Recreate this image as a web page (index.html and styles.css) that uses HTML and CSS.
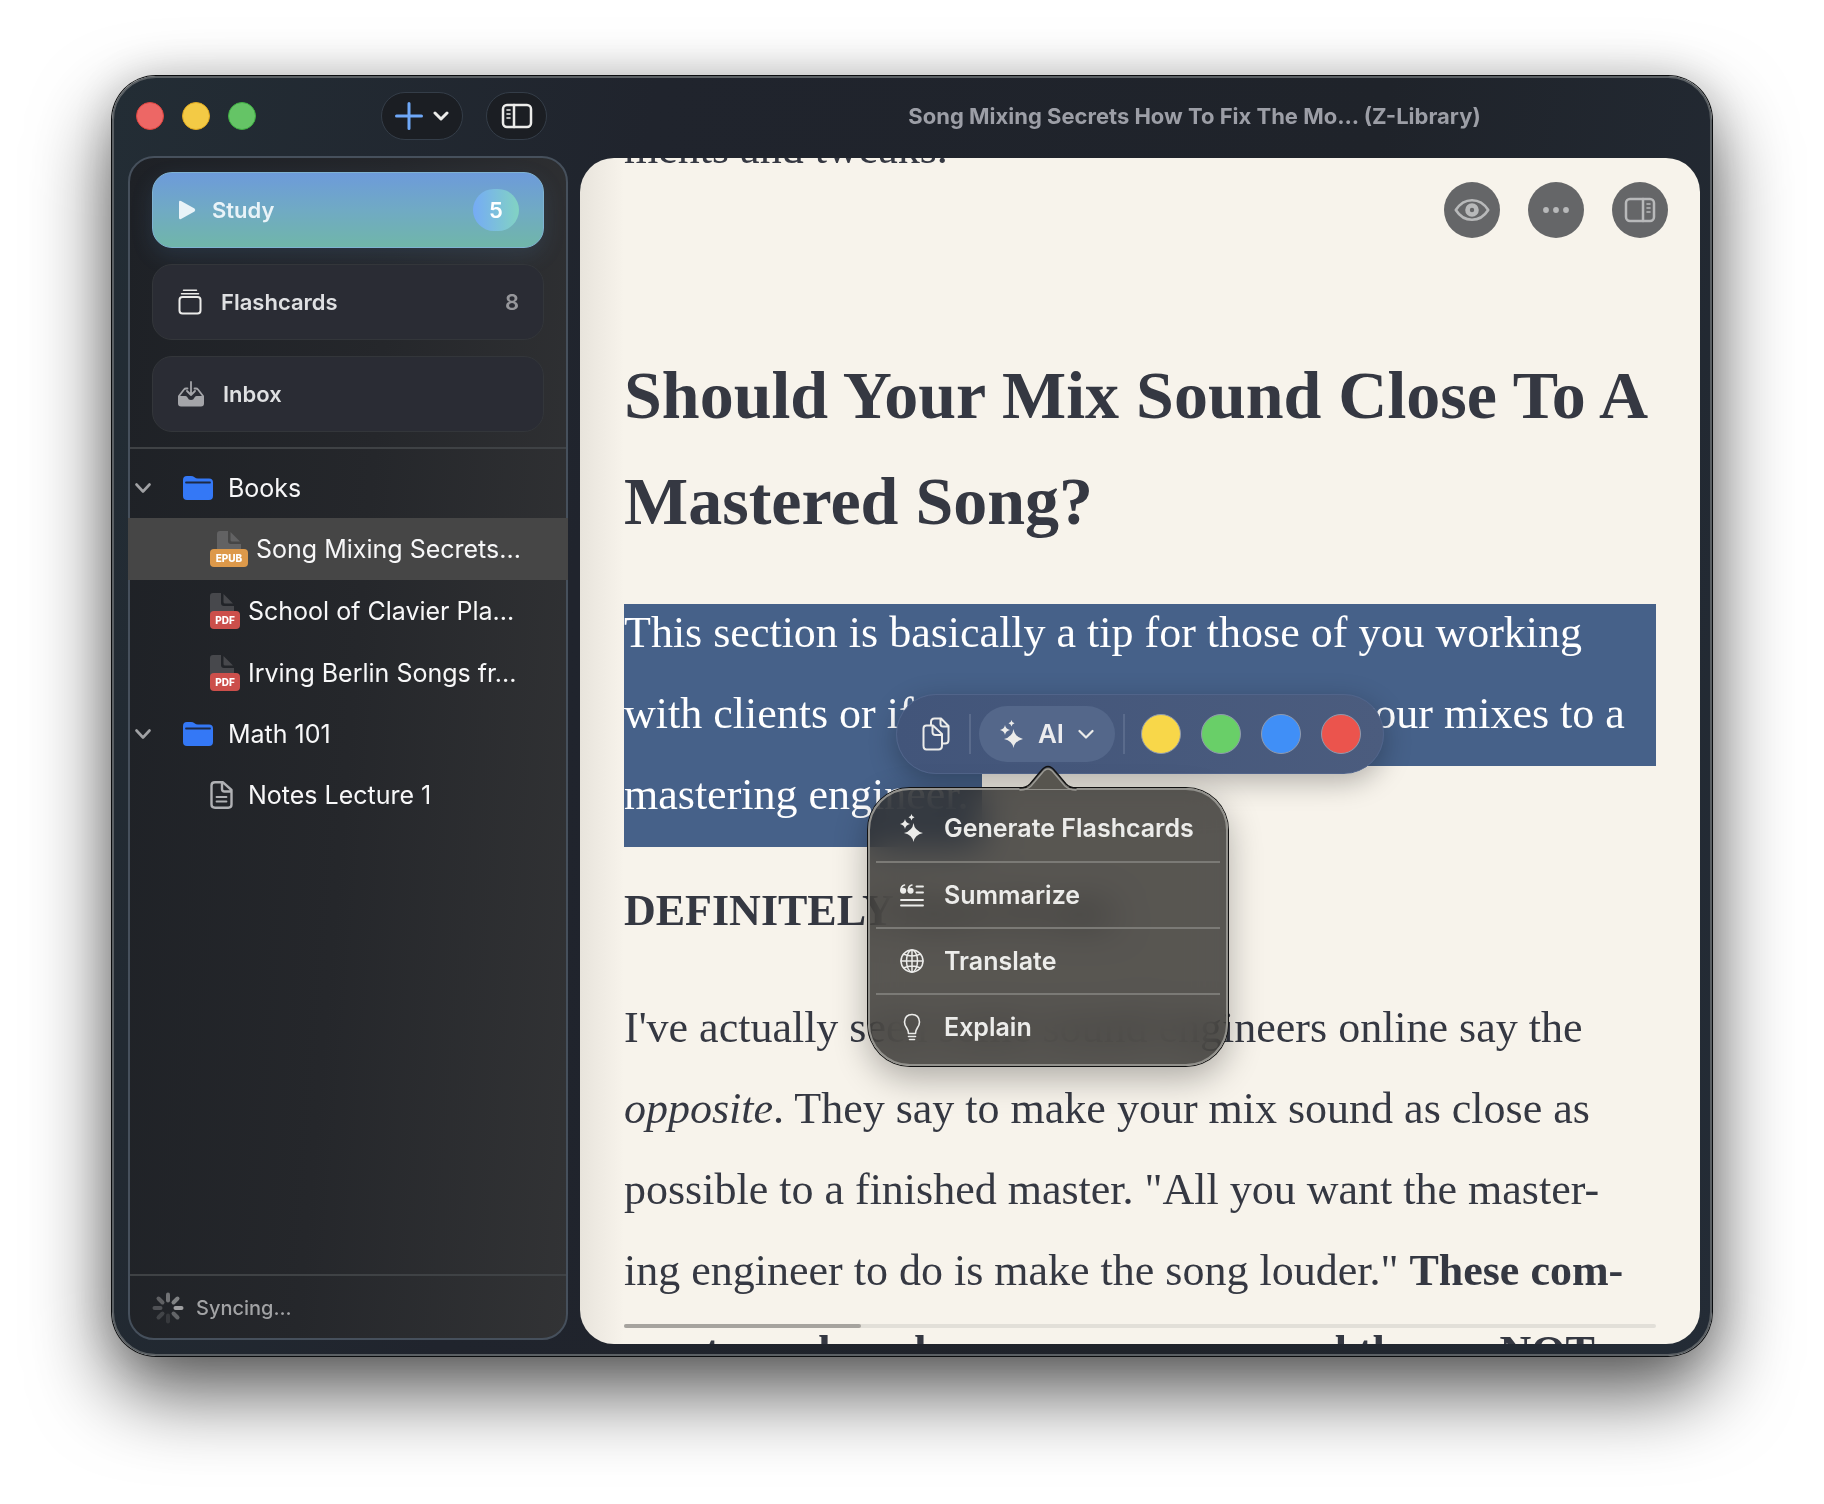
FILE: index.html
```html
<!DOCTYPE html>
<html lang="en">
<head>
  <meta charset="UTF-8">
  <meta name="viewport" content="width=device-width, initial-scale=1">
  <title>Song Mixing Secrets</title>
  <link rel="stylesheet" href="styles.css">
</head>
<body>
  <div class="window">
    <aside class="side">
      <header class="side-bar">
        <div class="lights">
          <button class="light red" aria-label="Close"></button>
          <button class="light amber" aria-label="Minimize"></button>
          <button class="light green" aria-label="Zoom"></button>
        </div>
        <button class="tool add" aria-label="Add">
          <svg width="28" height="28" viewBox="0 0 28 28"><path d="M14 1.500v25M1.500 14h25" stroke="#6fa8f8" stroke-width="3"/></svg>
          <svg width="16" height="16" viewBox="0 0 16 16"><path d="M2 5l6 6 6-6" stroke-width="3"/></svg>
        </button>
        <button class="tool toggle" aria-label="Toggle sidebar">
          <svg width="32" height="26" viewBox="0 0 32 26"><rect x="2" y="2" width="28" height="22" rx="4" stroke-width="2.500"/><path d="M13 2v22" stroke-width="2.500"/><path d="M6 7h3M6 11h3M6 15h3" stroke-width="1.600"/></svg>
        </button>
      </header>

      <div class="panel">
        <nav class="cards">
          <button class="card study">
            <svg width="18" height="20" viewBox="0 0 18 20"><path d="M1 2.200v15.600q0 2 2 1.100l13.500-7.500q1.500-1.400 0-2.800L3 1.100Q1 .2 1 2.200z" fill="#e9f3f8" stroke="none"/></svg>
            <span>Study</span>
            <b class="count">5</b>
          </button>
          <button class="card">
            <svg width="24" height="26" viewBox="0 0 24 26"><rect x="1.500" y="8" width="21" height="16.500" rx="3" stroke-width="2"/><path d="M3.500 4.700h17M5.500 1.300h13" stroke-width="1.500"/></svg>
            <span>Flashcards</span>
            <b class="num">8</b>
          </button>
          <button class="card">
            <svg class="dim" width="26" height="26" viewBox="0 0 26 26"><path d="M0 15h7.500q1.500 0 2 1.500 1 2.500 3.500 2.500t3.500-2.500q.5-1.500 2-1.500H26v7.500q0 3-3 3H3q-3 0-3-3z" fill="#a4a5a9" stroke="none"/><path d="M1 15l5-6.500q.8-1 2-1h1.500M25 15l-5-6.500q-.8-1-2-1h-1.500M13 1v12.500M9 10l4 4 4-4" stroke-width="1.800"/></svg>
            <span>Inbox</span>
          </button>
        </nav>

        <ul class="tree">
          <li class="folder">
            <svg class="chev" width="16" height="16" viewBox="0 0 16 16"><path d="M1.500 4.500l6.500 7 6.500-7" stroke-width="2.600"/></svg>
            <svg width="30" height="24" viewBox="0 0 30 24"><path d="M0 4q0-4 4-4h4q2 0 3.500 1.200T15 2.400h11q4 0 4 4V20q0 4-4 4H4q-4 0-4-4z" fill="#3478f6" stroke="none"/><path d="M3 6.500h24" stroke="#1d2a45" stroke-width="1.800"/></svg>
            <span>Books</span>
          </li>
          <li class="file selected">
            <div class="doc wide">
              <svg width="24" height="28" viewBox="0 0 24 28"><path d="M3 0h8v10q0 3 3 3h10v15H0V3q0-3 3-3z" fill="#626263" stroke="none"/><path d="M13.500 1v8q0 1.500 1.500 1.500h8z" fill="#626263" stroke="none"/></svg>
              <i class="badge epub">EPUB</i>
            </div>
            <span>Song Mixing Secrets...</span>
          </li>
          <li class="file">
            <div class="doc">
              <svg width="24" height="28" viewBox="0 0 24 28"><path d="M3 0h8v10q0 3 3 3h10v15H0V3q0-3 3-3z" fill="#47484c" stroke="none"/><path d="M13.500 1v8q0 1.500 1.500 1.500h8z" fill="#47484c" stroke="none"/></svg>
              <i class="badge pdf">PDF</i>
            </div>
            <span>School of Clavier Pla...</span>
          </li>
          <li class="file">
            <div class="doc">
              <svg width="24" height="28" viewBox="0 0 24 28"><path d="M3 0h8v10q0 3 3 3h10v15H0V3q0-3 3-3z" fill="#47484c" stroke="none"/><path d="M13.500 1v8q0 1.500 1.500 1.500h8z" fill="#47484c" stroke="none"/></svg>
              <i class="badge pdf">PDF</i>
            </div>
            <span>Irving Berlin Songs fr...</span>
          </li>
          <li class="folder">
            <svg class="chev" width="16" height="16" viewBox="0 0 16 16"><path d="M1.500 4.500l6.500 7 6.500-7" stroke-width="2.600"/></svg>
            <svg width="30" height="24" viewBox="0 0 30 24"><path d="M0 4q0-4 4-4h4q2 0 3.500 1.200T15 2.400h11q4 0 4 4V20q0 4-4 4H4q-4 0-4-4z" fill="#3478f6" stroke="none"/><path d="M3 6.500h24" stroke="#1d2a45" stroke-width="1.800"/></svg>
            <span>Math 101</span>
          </li>
          <li class="file">
            <div class="doc">
              <svg class="note" width="24" height="28" viewBox="0 0 24 28"><path d="M5 1.300h8L21.500 9v14.500q0 3.200-3.200 3.200H5q-3.500 0-3.500-3.200v-19Q1.500 1.300 5 1.300zM12 2v6q0 2.500 2.500 2.500H21" stroke-width="2.400"/><path d="M6.500 16h10M6.500 20.500h10" stroke-width="1.800"/></svg>
            </div>
            <span>Notes Lecture 1</span>
          </li>
        </ul>

        <footer class="sync">
          <svg class="spinner" width="32" height="32" viewBox="0 0 32 32" stroke-width="4">
            <path d="M16 2.500v6" opacity=".55"/><path d="M25.500 6.500l-4 4" opacity=".65"/><path d="M23.500 16h6" opacity=".85"/><path d="M21.500 21.500l4 4" opacity=".45"/>
            <path d="M16 23.500v6" opacity=".15"/><path d="M10.500 21.500l-4 4" opacity=".22"/><path d="M2.500 16h6" opacity=".32"/><path d="M6.500 6.500l4 4" opacity=".42"/>
          </svg>
          <span>Syncing...</span>
        </footer>
      </div>
    </aside>

    <main class="main">
      <header class="title">Song Mixing Secrets How To Fix The Mo... (Z-Library)</header>

      <section class="reader">
        <div class="actions">
          <button aria-label="Appearance">
            <svg width="36" height="24" viewBox="0 0 36 24"><path d="M1.800 12Q8 2.200 18 2.200T34.200 12Q28 21.800 18 21.800T1.800 12z" stroke-width="2.600"/><circle cx="18" cy="12" r="4.500" stroke-width="4.600"/></svg>
          </button>
          <button aria-label="More">
            <svg class="dots" width="28" height="8" viewBox="0 0 28 8"><circle cx="4" cy="4" r="2.900"/><circle cx="14" cy="4" r="2.900"/><circle cx="24" cy="4" r="2.900"/></svg>
          </button>
          <button aria-label="Toggle notes">
            <svg width="32" height="26" viewBox="0 0 32 26"><rect x="2" y="2" width="28" height="22" rx="4" stroke-width="2.500"/><path d="M19 2v22" stroke-width="2.500"/><path d="M23 7h3M23 11h3M23 15h3" stroke-width="1.600"/></svg>
          </button>
        </div>

        <article class="page">
          <p>ments and tweaks.</p>
          <h1>Should Your Mix Sound Close To A<br>Mastered Song?</h1>
          <div class="selection">
            <p class="marked">
              <span>This section is basically a tip for those of you working</span>
              <span>with clients or if you’re planning to send your mixes to a</span>
              <span class="last">mastering engineer.</span>
            </p>

            <div class="toolbar">
              <button class="copy" aria-label="Copy">
                <svg width="28" height="34" viewBox="0 0 28 34"><path d="M9 8V5q0-3.500 3.500-3.500H19L26.500 9v14q0 3.500-3.500 3.500h-3M18.500 2v5q0 2.500 2.500 2.500h5" stroke-width="2"/><path d="M4.500 8.500H11L20 17v11.500q0 4-3.500 4h-12q-3 0-3-4v-17q0-3 3-3zM10.500 9v6q0 3 3 3H19.500" stroke-width="2"/></svg>
              </button>
              <hr>
              <button class="ai">
                <svg class="spark" width="24" height="28" viewBox="0 0 24 28"><path d="M13.500 9q1 7.800 9.500 10-8.500 2-9.500 9-1-7-9.500-9 8.500-2.200 9.500-10zM5 5q.6 4 5 5-4.400 1-5 5-.6-4-5-5 4.400-1 5-5zM11.500 0q.3 2.500 3 3.200-2.700.7-3 3.300-.3-2.600-3-3.300 2.700-.7 3-3.200z"/></svg>
                AI
                <svg width="16" height="16" viewBox="0 0 16 16"><path d="M1.500 5l6.500 6.500L14.500 5" stroke-width="2.200"/></svg>
              </button>
              <hr>
              <button class="swatch yellow" aria-label="Yellow"></button>
              <button class="swatch lime" aria-label="Green"></button>
              <button class="swatch blue" aria-label="Blue"></button>
              <button class="swatch coral" aria-label="Red"></button>
            </div>

            <div class="menu">
              <svg class="arrow" width="60" height="26" viewBox="0 0 60 26"><path class="fill" d="M2 24q6 0 10-4L23 7q7-9 14 0l11 13q4 4 10 4z"/><path d="M2 23q6 0 10-4L23 6q7-9 14 0l11 13q4 4 10 4" stroke="#111" stroke-width="1.500"/><path d="M2 25q7 0 11-4L24 8q6-8 12 0l11 13q4 4 11 4" stroke="#9a9994" stroke-width="1.500"/></svg>
              <button>
                <svg class="spark" width="24" height="28" viewBox="0 0 24 28"><path d="M13.500 9q1 7.800 9.500 10-8.500 2-9.500 9-1-7-9.500-9 8.500-2.200 9.500-10zM5 5q.6 4 5 5-4.400 1-5 5-.6-4-5-5 4.400-1 5-5zM11.500 0q.3 2.500 3 3.200-2.700.7-3 3.300-.3-2.600-3-3.300 2.700-.7 3-3.200z"/></svg>
                Generate Flashcards
              </button>
              <button>
                <svg width="24" height="24" viewBox="0 0 24 24"><path d="M1 17h22M1 22.500h22M16.500 3.500H23M16.500 9.500H23" stroke-width="1.900"/><g fill="#ececea" stroke="none"><circle cx="3.200" cy="7.800" r="3"/><circle cx="10.600" cy="7.800" r="3"/></g><path d="M1 8q-.4-5 3.500-6M8.400 8q-.4-5 3.500-6" stroke-width="1.600"/></svg>
                Summarize
              </button>
              <button>
                <svg width="24" height="24" viewBox="0 0 24 24" stroke-width="1.500"><circle cx="12" cy="12" r="11"/><ellipse cx="12" cy="12" rx="5.500" ry="11"/><path d="M12 1v22M1 12h22M3.500 5q8.500 4 17 0M3.500 19q8.500-4 17 0"/></svg>
                Translate
              </button>
              <button>
                <svg width="24" height="28" viewBox="0 0 24 28" stroke-width="1.600"><path d="M8.500 20.500q0-3-1.800-5.500-2.200-3-2.200-6Q5 1.500 12 1.500T19.500 9q0 3-2.200 6-1.800 2.500-1.800 5.500zM8.500 23.500h7M9.500 26.500h5"/></svg>
                Explain
              </button>
            </div>
          </div>
          <p class="strong">DEFINITELY leave it out.</p>
          <p>I've actually seen some sound engineers online say the<br><em>opposite</em>. They say to make your mix sound as close as<br>possible to a finished master. "All you want the master-<br>ing engineer to do is make the song louder." <b>These com-<br>ments are based on common sense and theory. NOT</b></p>
        </article>

        <div class="progress"><div class="done"></div></div>
      </section>
    </main>
  </div>
</body>
</html>
```

FILE: styles.css
```css
* {
  box-sizing: border-box;
}
body {
  margin: 0;
  height: 100vh;
  padding: 76px 112px 148px;
  background: #fff;
  font-family: Inter, "Liberation Sans", sans-serif;
  overflow: hidden;
}
button {
  border: 0;
  padding: 0;
  background: none;
  color: inherit;
  font: inherit;
  cursor: pointer;
}
svg {
  flex: none;
  fill: none;
  stroke: #ececea;
  stroke-linecap: round;
  stroke-linejoin: round;
}

.window {
  display: flex;
  gap: 12px;
  height: 100%;
  padding: 0 10px 0 14px;
  border: 2px solid #5b6064;
  border-radius: 44px;
  background: linear-gradient(100deg, #232d35, #20242d 30%, #1f232a 70%, #242c36);
  box-shadow: 0 0 0 1px #0a0c0e, 0 36px 80px rgba(0, 0, 0, 0.66), 0 0 40px rgba(0, 0, 0, 0.14);
}

/* sidebar */
.side {
  display: flex;
  flex-direction: column;
  width: 440px;
  padding-bottom: 14px;
}
.side-bar {
  display: flex;
  align-items: center;
  height: 78px;
  padding: 0 21px 2px 8px;
}
.lights {
  display: flex;
  gap: 18px;
  margin-right: auto;
}
.light {
  width: 28px;
  height: 28px;
  border-radius: 50%;
}
.red {
  background: #ed6765;
  border: 1px solid #e0443f;
}
.amber {
  background: #f3ca45;
  border: 1px solid #dfa820;
}
.green {
  background: #65c466;
  border: 1px solid #3fae42;
}
.tool {
  display: flex;
  align-items: center;
  justify-content: center;
  gap: 10px;
  height: 48px;
  border: 1px solid #343d48;
  border-radius: 24px;
  background: #1b1e23;
}
.add {
  width: 82px;
}
.toggle {
  width: 61px;
  margin-left: 23px;
}
.panel {
  display: flex;
  flex: 1;
  flex-direction: column;
  border: 2px solid #46505c;
  border-radius: 26px;
  background: linear-gradient(95deg, #1e2126, #25272b 50%, #323335);
}
.cards {
  display: flex;
  flex-direction: column;
  gap: 16px;
  padding: 14px 22px 15px;
  border-bottom: 2px solid #3f4245;
}
.card {
  display: flex;
  align-items: center;
  gap: 19px;
  height: 76px;
  padding: 0 24px 0 25px;
  border: 1px solid #33363a;
  border-radius: 20px;
  background: #2a2c34;
  color: #dfe0e2;
  font-size: 22px;
  font-weight: 600;
}
.card .dim {
  stroke: #a4a5a9;
}
.study {
  gap: 16px;
  border-color: #7fb3d2;
  background: linear-gradient(#6d9bda, #70aac4 50%, #70b6a9);
  color: #e9f3f8;
  box-shadow: 0 8px 22px rgba(90, 140, 200, 0.16);
}
.count {
  width: 46px;
  height: 42px;
  margin-left: auto;
  border-radius: 21px;
  background: linear-gradient(90deg, #75abf5, #82d3c3);
  color: #fff;
  line-height: 42px;
  font-weight: 600;
}
.num {
  margin-left: auto;
  color: #96979b;
  font-weight: 600;
}
.tree {
  flex: 1;
  margin: 0;
  padding: 9px 0 0;
  list-style: none;
  color: #f7f7f8;
  font-size: 25px;
  font-weight: 400;
}
.tree li {
  display: flex;
  align-items: center;
}
.folder {
  gap: 15px;
  height: 60px;
  padding-left: 5px;
}
.folder .chev {
  margin-right: 17px;
  stroke: #a0a1a4;
}
.file {
  gap: 8px;
  height: 62px;
  padding-left: 80px;
}
.tree .selected {
  margin: 0 -2px;
  padding-left: 82px;
  background: #464646;
}
.doc {
  position: relative;
  width: 30px;
  height: 36px;
}
.wide {
  width: 38px;
  padding-left: 7px;
}
.note {
  margin-top: 4px;
  stroke: #b0b1b4;
}
.badge {
  position: absolute;
  left: 0;
  bottom: 0;
  width: 100%;
  height: 18px;
  border-radius: 4px;
  color: #fff;
  font-size: 10px;
  font-style: normal;
  font-weight: 800;
  line-height: 18px;
  text-align: center;
}
.epub {
  background: #dd994a;
}
.pdf {
  background: #cc4f4b;
}
.sync {
  display: flex;
  align-items: center;
  gap: 12px;
  height: 64px;
  padding: 2px 0 0 22px;
  border-top: 2px solid #3f4245;
  color: #a2a3a5;
  font-size: 20px;
  font-weight: 500;
}
.spinner {
  stroke: #b4b5b6;
}

/* reader */
.main {
  display: flex;
  flex: 1;
  flex-direction: column;
  min-width: 0;
  padding-bottom: 10px;
}
.title {
  height: 80px;
  padding-left: 109px;
  color: #9c9ea6;
  font-size: 22px;
  font-weight: 700;
  line-height: 76px;
  text-align: center;
  white-space: nowrap;
}
.reader {
  position: relative;
  flex: 1;
  min-height: 0;
  padding: 0 44px;
  border-radius: 34px;
  background: linear-gradient(90deg, #e8e4dc, #f7f3eb 44px);
  color: #353842;
  overflow: hidden;
}
.actions {
  position: absolute;
  top: 24px;
  right: 32px;
  display: flex;
  gap: 28px;
}
.actions button {
  display: flex;
  align-items: center;
  justify-content: center;
  width: 56px;
  height: 56px;
  border-radius: 50%;
  background: #656668;
}
.actions svg {
  stroke: #b8b9ba;
}
.actions .dots {
  fill: #b8b9ba;
  stroke: none;
}
.page {
  /* scrolled a little way down the chapter */
  margin-top: -50px;
  font-family: "Liberation Serif", serif;
  font-size: 44px;
  line-height: 81px;
  white-space: nowrap;
}
.page p {
  margin: 0 0 36px;
}
.page h1 {
  margin: 153px 0 50px;
  font-size: 68px;
  line-height: 106px;
}
.selection {
  position: relative;
}
.page .marked {
  margin-bottom: 23px;
}
.marked span {
  display: block;
  padding-bottom: 24px;
  background: #466189;
  color: #fff;
  line-height: 57px;
}
.marked .last {
  width: 358px;
}
.page .strong {
  font-weight: bold;
}
.toolbar {
  position: absolute;
  top: 90px;
  left: 272px;
  display: flex;
  align-items: center;
  width: 488px;
  height: 80px;
  padding: 0 22px 0 25px;
  border: 1px solid #51648a;
  border-radius: 40px;
  background: linear-gradient(90deg, #42557a, #4b5c7e);
  box-shadow: 0 8px 28px rgba(0, 0, 0, 0.28);
  color: #ececee;
  font-family: Inter, "Liberation Sans", sans-serif;
  font-size: 26px;
  line-height: 32px;
}
.copy {
  display: flex;
}
.toolbar hr {
  width: 2px;
  height: 40px;
  margin: 0 8px;
  border: 0;
  background: #5a6b8c;
}
.copy + hr {
  margin-left: 19px;
}
.ai {
  display: flex;
  align-items: center;
  justify-content: center;
  gap: 14px;
  width: 136px;
  height: 56px;
  border-radius: 28px;
  background: #54678a;
  font-weight: 600;
}
.spark {
  fill: #ececea;
  stroke: none;
}
.swatch {
  width: 40px;
  height: 40px;
  margin-left: 20px;
  border: 1px solid #8f9aae;
  border-radius: 50%;
}
.swatch.yellow {
  margin-left: 8px;
  background: #f8d749;
}
.lime {
  background: #69cf68;
}
.blue {
  background: #408ff7;
}
.coral {
  background: #eb544d;
}
.menu {
  position: absolute;
  top: 184px;
  left: 244px;
  width: 360px;
  padding: 5px 6px;
  border: 2px solid #92918c;
  border-radius: 42px;
  background: rgba(42, 41, 38, 0.78);
  backdrop-filter: blur(18px) saturate(1.2);
  box-shadow: 0 0 0 1px #111, 0 12px 34px rgba(0, 0, 0, 0.3);
  color: #ececea;
  font-family: Inter, "Liberation Sans", sans-serif;
  font-size: 25px;
  font-weight: 600;
  line-height: 32px;
}
.menu button {
  display: flex;
  align-items: center;
  gap: 20px;
  width: 100%;
  height: 66px;
  padding-left: 24px;
}
.menu button + button {
  border-top: 2px solid #7b7a76;
}
.arrow {
  position: absolute;
  top: -25px;
  left: 148px;
}
.arrow .fill {
  fill: #57554f;
  stroke: none;
}
.progress {
  position: absolute;
  right: 44px;
  bottom: 16px;
  left: 44px;
  height: 4px;
  border-radius: 2px;
  background: #e2dfd8;
}
.done {
  width: 23%;
  height: 4px;
  border-radius: 2px;
  background: #a6a39e;
}
```
